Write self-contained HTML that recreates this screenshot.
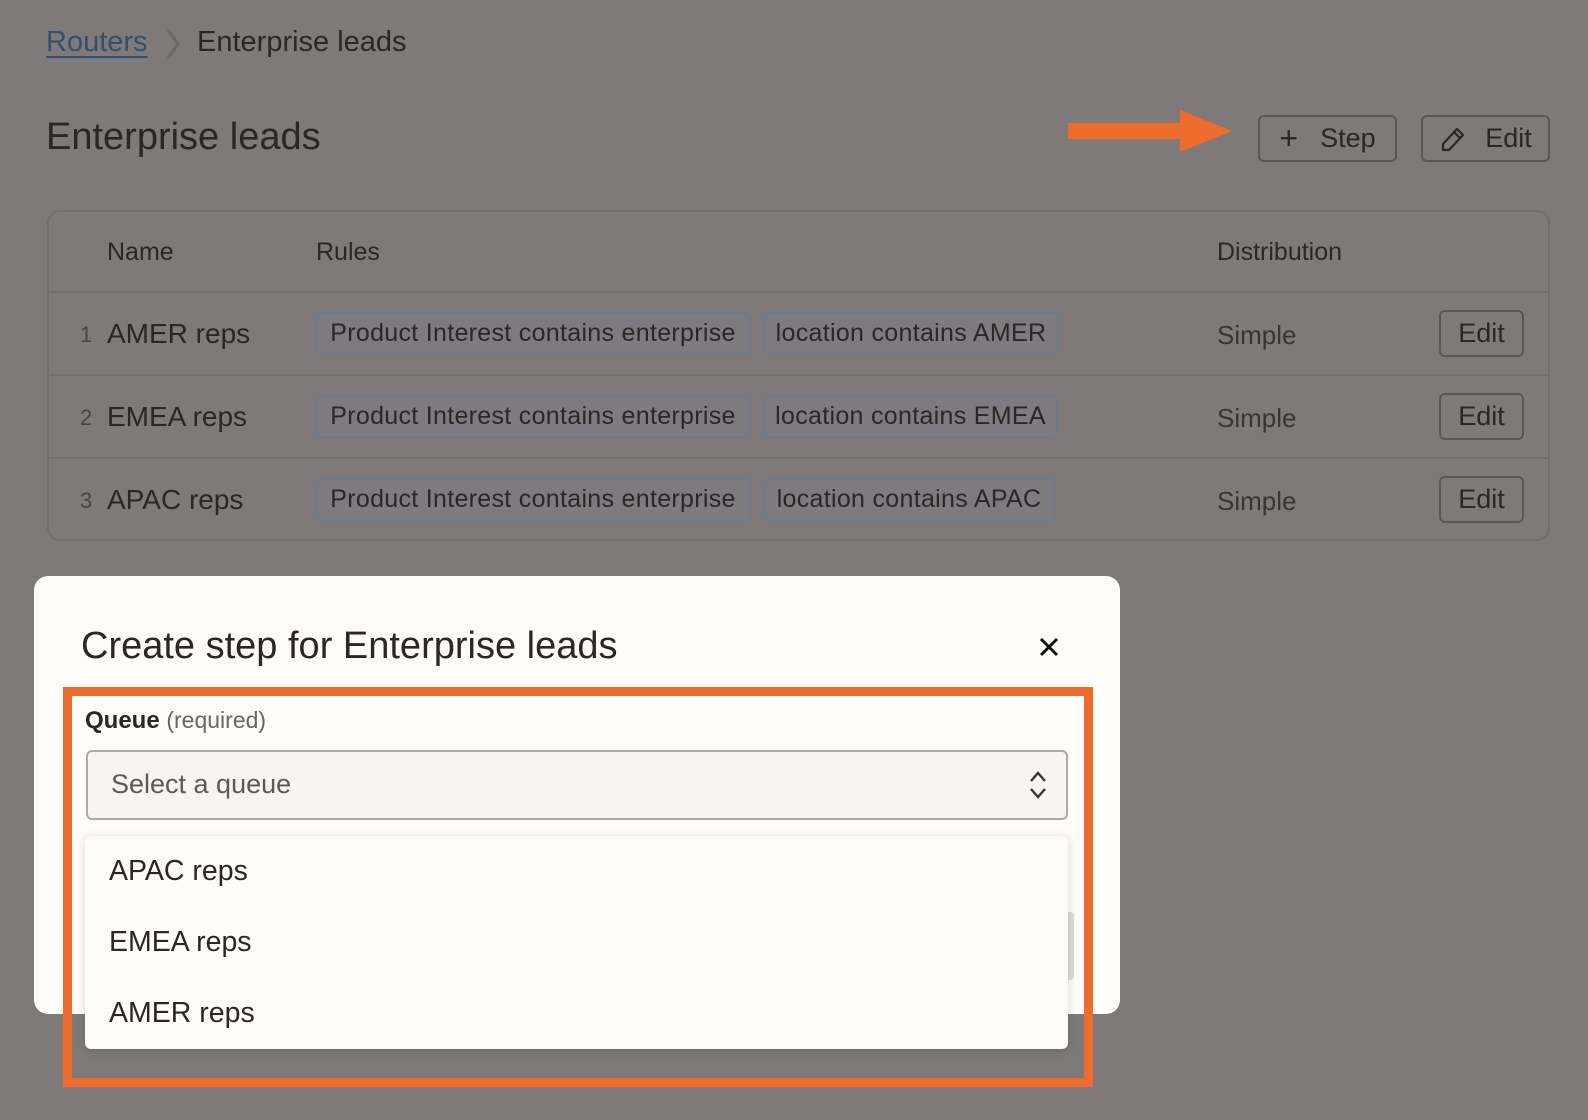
<!DOCTYPE html>
<html><head><meta charset="utf-8"><style>
*{box-sizing:border-box;margin:0;padding:0}
body{width:1588px;height:1120px;background:#7f7a79;font-family:"Liberation Sans",sans-serif;color:#2c2624;position:relative;overflow:hidden}
.a{position:absolute;white-space:nowrap}
.tag{position:absolute;height:43px;border:2px solid #6b7c8d;background:#7d7b7f;border-radius:6px;font-size:25px;letter-spacing:0.3px;line-height:39px;text-align:center;color:#2c2624}
.btn{position:absolute;border:2px solid #5c5654;border-radius:6px;font-size:27px;color:#2c2624;display:flex;align-items:center;justify-content:center}
.hr{position:absolute;left:48px;width:1500px;height:2px;background:#736e6c}
</style></head><body>
<div class="a" style="left:46px;top:26px;font-size:29px;color:#34506a;text-decoration:underline;text-underline-offset:5px">Routers</div>
<svg class="a" style="left:164px;top:28px" width="20" height="32"><path d="M4 2 L14 16 L4 30" stroke="#6d6866" stroke-width="3" fill="none"/></svg>
<div class="a" style="left:197px;top:26px;font-size:29px">Enterprise leads</div>
<div class="a" style="left:46px;top:116px;font-size:38px">Enterprise leads</div>
<svg class="a" style="left:1068px;top:110px" width="166" height="44"><rect x="0" y="13" width="114" height="16" fill="#ee6c2d"/><path d="M112 0 L164 21 L112 42Z" fill="#ee6c2d"/></svg>
<div class="btn" style="left:1258px;top:115px;width:139px;height:47px"><span style="font-size:32px;margin-right:22px">+</span>Step</div>
<div class="btn" style="left:1421px;top:115px;width:129px;height:47px"><svg width="28" height="28" style="margin-right:18px"><path d="M4 25 L4 19 L18 4 L24 10 L10 25Z M15 7 L21 13" stroke="#2c2624" stroke-width="2.2" fill="none" stroke-linejoin="round"/></svg>Edit</div>
<div class="a" style="left:47px;top:210px;width:1503px;height:331px;border:2px solid #736e6c;border-radius:13px"></div>
<div class="a" style="left:107px;top:238px;font-size:25px">Name</div>
<div class="a" style="left:316px;top:238px;font-size:25px">Rules</div>
<div class="a" style="left:1217px;top:238px;font-size:25px">Distribution</div>
<div class="hr" style="top:291px"></div><div class="hr" style="top:374px"></div><div class="hr" style="top:457px"></div>

<div class="a" style="left:80px;top:322px;font-size:22px;color:#4a4442">1</div>
<div class="a" style="left:107px;top:318px;font-size:28px">AMER reps</div>
<div class="tag" style="left:315px;top:312px;width:436px">Product Interest contains enterprise</div>
<div class="tag" style="left:763px;top:312px;width:296px">location contains AMER</div>
<div class="a" style="left:1217px;top:320px;font-size:26px;color:#3a3432">Simple</div>
<div class="btn" style="left:1439px;top:310px;width:85px;height:47px">Edit</div>

<div class="a" style="left:80px;top:405px;font-size:22px;color:#4a4442">2</div>
<div class="a" style="left:107px;top:401px;font-size:28px">EMEA reps</div>
<div class="tag" style="left:315px;top:395px;width:436px">Product Interest contains enterprise</div>
<div class="tag" style="left:763px;top:395px;width:295px">location contains EMEA</div>
<div class="a" style="left:1217px;top:403px;font-size:26px;color:#3a3432">Simple</div>
<div class="btn" style="left:1439px;top:393px;width:85px;height:47px">Edit</div>

<div class="a" style="left:80px;top:488px;font-size:22px;color:#4a4442">3</div>
<div class="a" style="left:107px;top:484px;font-size:28px">APAC reps</div>
<div class="tag" style="left:315px;top:478px;width:436px">Product Interest contains enterprise</div>
<div class="tag" style="left:763px;top:478px;width:292px">location contains APAC</div>
<div class="a" style="left:1217px;top:486px;font-size:26px;color:#3a3432">Simple</div>
<div class="btn" style="left:1439px;top:476px;width:85px;height:47px">Edit</div>

<div class="a" style="left:34px;top:576px;width:1086px;height:438px;background:#fdfcf9;border-radius:14px"></div>
<div class="a" style="left:81px;top:625px;font-size:38px;color:#2c2624">Create step for Enterprise leads</div>
<svg class="a" style="left:1039px;top:637px" width="20" height="20"><path d="M2 2 L18 18 M18 2 L2 18" stroke="#111" stroke-width="3"/></svg>
<div class="a" style="left:1066px;top:912px;width:8px;height:68px;background:#dedbd6;border-radius:4px"></div>
<div class="a" style="left:85px;top:707px;font-size:24px"><b>Queue</b> <span style="color:#6a6462;font-size:23px">(required)</span></div>
<div class="a" style="left:86px;top:750px;width:982px;height:70px;background:#f6f5f2;border:2px solid #adaaa5;border-radius:6px"></div>
<div class="a" style="left:111px;top:769px;font-size:27px;color:#5e5856">Select a queue</div>
<svg class="a" style="left:1028px;top:770px" width="20" height="30"><path d="M3 11 L10 3 L17 11 M3 19 L10 27 L17 19" stroke="#3a3432" stroke-width="2.4" fill="none"/></svg>
<div class="a" style="left:85px;top:836px;width:983px;height:213px;background:#fdfcf9;border-radius:6px;box-shadow:0 2px 10px rgba(0,0,0,.15)"></div>
<div class="a" style="left:109px;top:855px;font-size:28.5px">APAC reps</div>
<div class="a" style="left:109px;top:926px;font-size:28.5px">EMEA reps</div>
<div class="a" style="left:109px;top:997px;font-size:28.5px">AMER reps</div>
<div class="a" style="left:63px;top:687px;width:1030px;height:400px;border:9px solid #ee6c2d"></div>
</body></html>
